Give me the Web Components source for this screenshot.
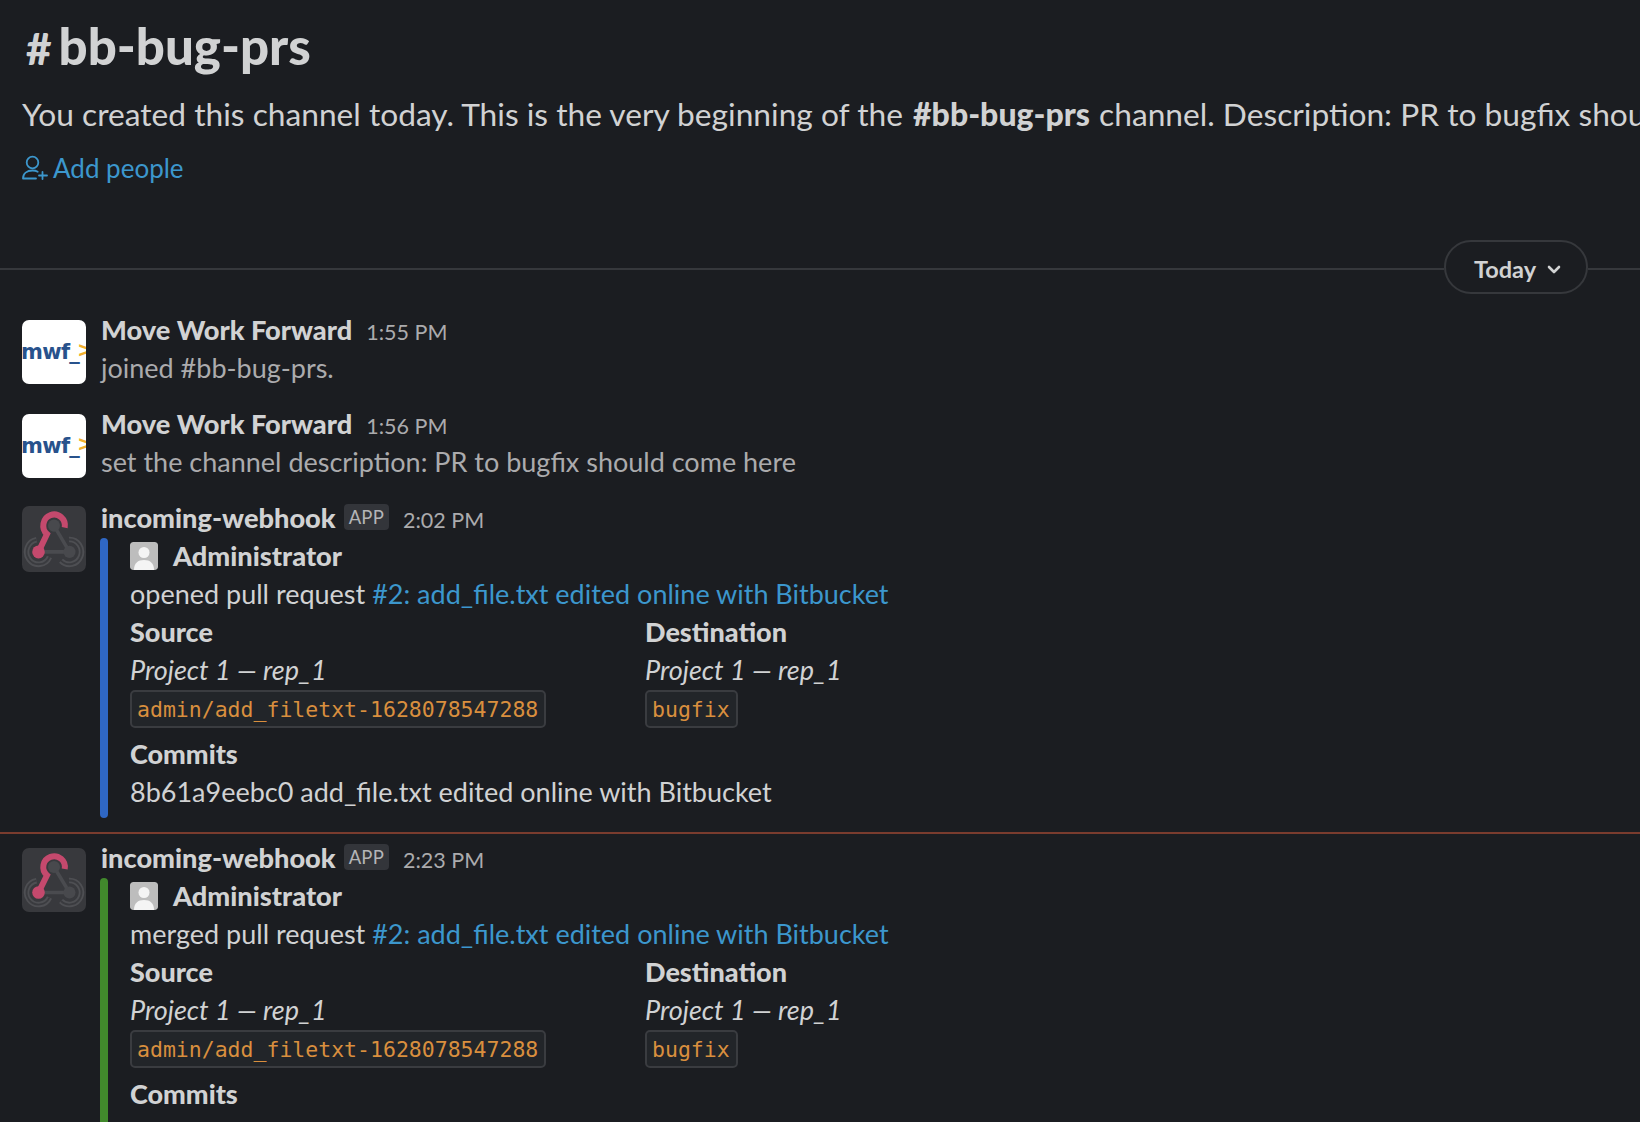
<!DOCTYPE html>
<html lang="en">
<head>
<meta charset="utf-8">
<title>#bb-bug-prs</title>
<style>
  html, body { margin: 0; height: 100%; overflow: hidden; background: #1b1d21; }
  body { font-family: Lato, "Liberation Sans", sans-serif; font-size: 27px; line-height: 38px; color: #d1d2d3; }
</style>
</head>
<body>
<channel-intro name="bb-bug-prs">Description: PR to bugfix should come here</channel-intro>
<day-divider>Today</day-divider>

<chat-message sender="Move Work Forward" time="1:55 PM" avatar="mwf" muted>joined #bb-bug-prs.</chat-message>
<chat-message sender="Move Work Forward" time="1:56 PM" avatar="mwf" muted>set the channel description: PR to bugfix should come here</chat-message>

<chat-message sender="incoming-webhook" time="2:02 PM" avatar="hook" app style="--av-top:7px;--av-h:66px">
  <pr-attachment color="#2f67c4" action="opened" commits="8b61a9eebc0 add_file.txt edited online with Bitbucket"></pr-attachment>
</chat-message>
<new-line></new-line>
<chat-message sender="incoming-webhook" time="2:23 PM" avatar="hook" app style="--av-top:9px;--av-h:64px">
  <pr-attachment color="#41892c" action="merged"></pr-attachment>
</chat-message>

<script>
const introTpl = document.createElement('template');
introTpl.innerHTML = `
  <style>
    :host { display: block; padding: 14px 0 0 22px; height: 240px; box-sizing: border-box; white-space: nowrap; overflow: hidden; }
    h1 { margin: 0 0 0 4px; font-size: 51px; line-height: 64px; font-weight: 900; color: #d1d2d3; }
    h1 span { font-size: 44px; margin-right: 7px; }
    p { margin: 14px 0 0; font-size: 31.700px; line-height: 40px; color: #d1d2d3; }
    b { font-weight: 900; font-size: 32px; margin: 0 1px 0 2px; }
    a { display: flex; align-items: center; gap: 5px; margin-top: 15px; font-size: 26px; line-height: 38px; color: #3c97cd; }
    svg { width: 26px; height: 26px; display: block; }
  </style>
  <h1><span>#</span><bdi id="name"></bdi></h1>
  <p>You created this channel today. This is the very beginning of the <b id="ref"></b> channel. <slot></slot></p>
  <a>
    <svg viewBox="0 0 26 26" fill="none" stroke="currentColor" stroke-width="1.800" stroke-linecap="round">
      <circle cx="10.500" cy="7.500" r="5.800"/>
      <path d="M1 23.500c0-5 4-8 9.500-8 2 0 3.800.4 5.200 1.200M1 23.500h13M20.500 17v7M17 20.500h8"/>
    </svg>
    Add people
  </a>`;
class ChannelIntro extends HTMLElement {
  connectedCallback(){
    const root = this.attachShadow({mode:'open'});
    root.appendChild(introTpl.content.cloneNode(true));
    const name = this.getAttribute('name');
    root.querySelector('#name').textContent = name;
    root.querySelector('#ref').textContent = '#' + name;
  }
}
customElements.define('channel-intro', ChannelIntro);

const dividerTpl = document.createElement('template');
dividerTpl.innerHTML = `
  <style>
    :host { display: flex; align-items: flex-start; height: 71px; }
    .line { height: 2px; background: #36383c; flex: 1; margin-top: 28px; }
    .end { flex: 0 0 52px; }
    .pill { display: flex; align-items: center; justify-content: center; gap: 11px; box-sizing: border-box; width: 144px; height: 54px; padding: 3px 0 0 3px;
      border: 2px solid #36383c; border-radius: 27px; font-size: 23.500px; font-weight: 700; color: #d1d2d3; }
    svg { width: 14px; height: 10px; margin-top: 2px; }
  </style>
  <div class="line"></div>
  <div class="pill"><slot></slot>
    <svg viewBox="0 0 14 10" fill="none" stroke="currentColor" stroke-width="2.600" stroke-linecap="round" stroke-linejoin="round"><path d="M2 2l5 5 5-5"/></svg>
  </div>
  <div class="line end"></div>`;
class DayDivider extends HTMLElement {
  constructor(){
    super();
    this.attachShadow({mode:'open'}).appendChild(dividerTpl.content.cloneNode(true));
  }
}
customElements.define('day-divider', DayDivider);

const AVATARS = {
  mwf: `<div class="mwf"><span>mwf_</span><i>&gt;</i></div>`,
  hook: `<svg class="hook" viewBox="0 0 64 64" preserveAspectRatio="none">
      <rect width="64" height="64" rx="7" fill="#38393d"/>
      <g fill="none" stroke="#4e4f53" stroke-width="5.500">
        <path d="M14.500 32.700A12 12 0 1 0 27.500 49.500"/>
        <path d="M39 53A12 12 0 1 0 47 32.500"/>
      </g>
      <g fill="none" stroke="#3a3b3f" stroke-width="1.800">
        <path d="M14.500 32.700A12 12 0 1 0 27.500 49.500"/>
        <path d="M39 53A12 12 0 1 0 47 32.500"/>
      </g>
      <path d="M32 19L47.500 44.500H16.500" fill="none" stroke="#4a4b4f" stroke-width="3.500"/>
      <circle cx="32" cy="19" r="6" fill="#48494d"/>
      <circle cx="47.500" cy="44.500" r="6" fill="#48494d"/>
      <path d="M42.700 21A10.800 10.800 0 1 0 25 27.200L16.500 44.500" fill="none" stroke="#c4496d" stroke-width="6"/>
      <circle cx="16.500" cy="44.500" r="6.300" fill="#c4496d"/>
    </svg>`
};

const msgTpl = document.createElement('template');
msgTpl.innerHTML = `
  <style>
    :host { display: grid; grid-template-columns: 64px 1fr; column-gap: 15px; padding: 0 0 18px 22px; white-space: nowrap; }
    :host([app]) { padding-bottom: 0; }
    .av { margin-top: var(--av-top, 9px); }
    .mwf { position: relative; width: 64px; height: 64px; overflow: hidden; border-radius: 7px; background: #fff; color: #28528c; }
    .mwf span { position: absolute; left: -1px; top: 13px; font: 700 21px/38px "DejaVu Sans", sans-serif; letter-spacing: -.7px; }
    .mwf i { position: absolute; left: 55px; top: 11px; font: 700 21px/38px "DejaVu Sans", sans-serif; color: #f2b02c; }
    .hook { display: block; width: 64px; height: var(--av-h, 64px); }
    .head { display: flex; align-items: center; height: 38px; }
    .name { font-size: 27.200px; font-weight: 900; color: #d1d2d3; }
    .app { display: none; margin-left: 8px; padding: 0 5px; height: 26px; line-height: 26px; border-radius: 4px; background: #33353a;
      font-size: 18.500px; font-weight: 400; color: #b4b5b7; letter-spacing: .2px; margin-top: -2px; }
    :host([app]) .app { display: block; }
    .time { margin-left: 14px; font-size: 21.500px; color: #ababad; margin-top: 3px; }
    .body { color: #d1d2d3; }
    :host([muted]) .body { color: #ababad; }
  </style>
  <div class="av"></div>
  <div>
    <div class="head"><span class="name"></span><span class="app">APP</span><span class="time"></span></div>
    <div class="body"><slot></slot></div>
  </div>`;
class ChatMessage extends HTMLElement {
  connectedCallback(){
    const root = this.attachShadow({mode:'open'});
    root.appendChild(msgTpl.content.cloneNode(true));
    root.querySelector('.av').innerHTML = AVATARS[this.getAttribute('avatar')];
    root.querySelector('.name').textContent = this.getAttribute('sender');
    root.querySelector('.time').textContent = this.getAttribute('time');
  }
}
customElements.define('chat-message', ChatMessage);

const lineTpl = document.createElement('template');
lineTpl.innerHTML = `<style>:host { display: block; height: 2px; background: #7a3c2e; margin: 14px 0 5px; }</style>`;
class NewLine extends HTMLElement {
  constructor(){
    super();
    this.attachShadow({mode:'open'}).appendChild(lineTpl.content.cloneNode(true));
  }
}
customElements.define('new-line', NewLine);

const prTpl = document.createElement('template');
prTpl.innerHTML = `
  <style>
    :host { display: flex; gap: 22px; margin-left: -1px; }
    .bar { width: 8px; margin-top: 1px; border-radius: 4px; background: var(--bar); }
    .main { padding-bottom: 7px; }
    .author { display: flex; align-items: center; gap: 15px; font-weight: 900; height: 38px; font-size: 27.200px; }
    .pic { width: 28px; height: 28px; border-radius: 3px; display: block; }
    a { color: #3c97cd; }
    .cols { display: grid; grid-template-columns: 515px auto; justify-content: start; }
    strong { display: block; font-weight: 900; }
    em { display: block; font-style: italic; }
    code { display: block; width: fit-content; box-sizing: border-box; height: 38px; padding: 0 6px 0 5px; margin-top: 1px; font: 21.500px/35px "DejaVu Sans Mono", monospace;
      color: #d98f3e; background: #222529; border: 2px solid #3a3c40; border-radius: 5px; }
    .commits { margin-top: 7px; }
    .log:empty { height: 38px; }
  </style>
  <div class="bar"></div>
  <div class="main">
    <div class="author">
      <svg class="pic" viewBox="0 0 28 28"><rect width="28" height="28" rx="3" fill="#bdbdbd"/><circle cx="14" cy="10.500" r="5.500" fill="#f4f4f4"/><path d="M4 28c0-7 4-10 10-10s10 3 10 10z" fill="#f4f4f4"/></svg>
      Administrator
    </div>
    <div><span class="action"></span> pull request <a>#2: add_file.txt edited online with Bitbucket</a></div>
    <div class="cols">
      <div><strong>Source</strong><em>Project 1 — rep_1</em><code>admin/add_filetxt-1628078547288</code></div>
      <div><strong>Destination</strong><em>Project 1 — rep_1</em><code>bugfix</code></div>
    </div>
    <strong class="commits">Commits</strong>
    <div class="log"></div>
  </div>`;
class PrAttachment extends HTMLElement {
  connectedCallback(){
    const root = this.attachShadow({mode:'open'});
    root.appendChild(prTpl.content.cloneNode(true));
    this.style.setProperty('--bar', this.getAttribute('color'));
    root.querySelector('.action').textContent = this.getAttribute('action');
    root.querySelector('.log').textContent = this.getAttribute('commits') || '';
  }
}
customElements.define('pr-attachment', PrAttachment);
</script>
</body>
</html>
